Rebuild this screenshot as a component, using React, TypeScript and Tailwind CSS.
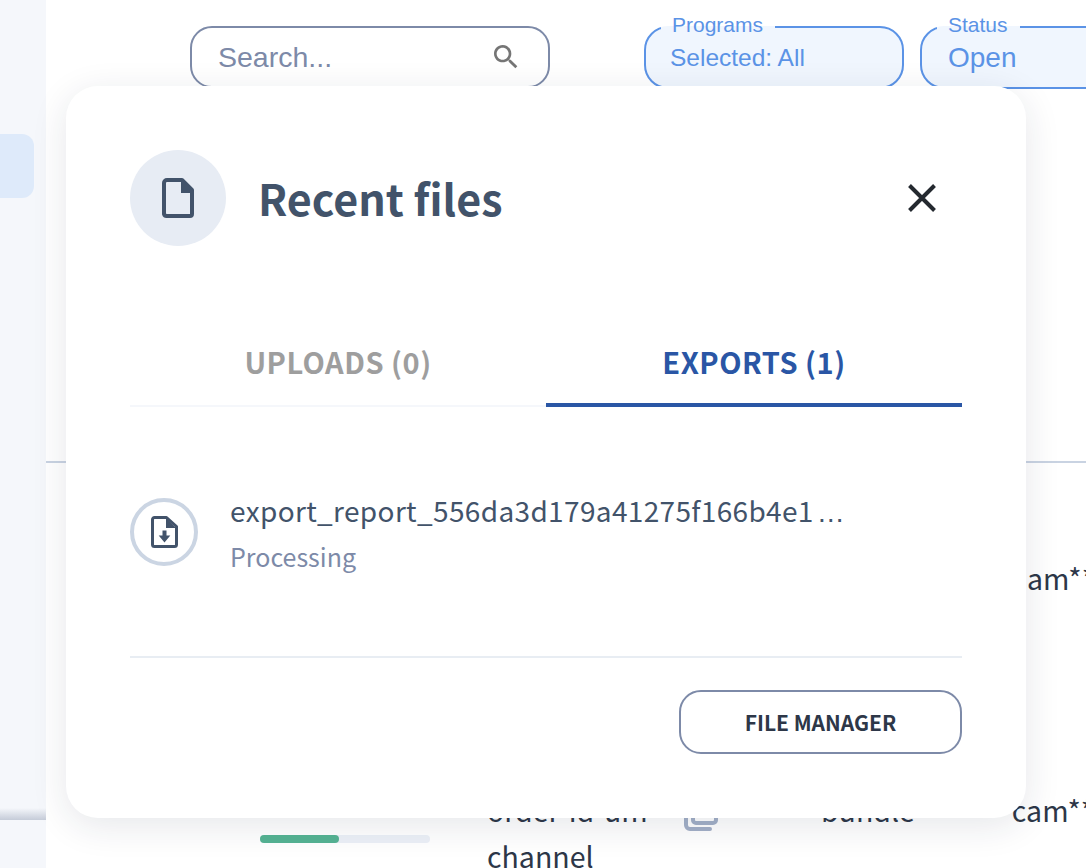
const sourceSans = '"Noto Sans CJK SC", "Noto Sans", sans-serif';

function SearchIcon() {
  return (
    <svg viewBox="0 0 24 24" className="h-8 w-8 fill-[#757575]">
      <path d="M15.5 14h-.79l-.28-.27C15.41 12.59 16 11.11 16 9.5 16 5.91 13.09 3 9.5 3S3 5.91 3 9.5 5.91 16 9.5 16c1.61 0 3.09-.59 4.23-1.57l.27.28v.79l5 4.99L20.49 19l-4.99-5zm-6 0C7.01 14 5 11.99 5 9.5S7.01 5 9.5 5 14 7.01 14 9.5 11.99 14 9.5 14z" />
    </svg>
  );
}

function FileIcon() {
  return (
    <svg viewBox="0 0 32 40" className="h-10 w-8">
      <path d="M5 2h15L30 12v24a2 2 0 0 1-2 2H5a3 3 0 0 1-3-2V5a3 3 0 0 1 3-3z" fill="none" stroke="#42536a" strokeWidth="4" strokeLinejoin="round" />
      <path d="M19 1 31 13v2H19z" fill="#42536a" />
    </svg>
  );
}

function ExportFileIcon() {
  return (
    <svg viewBox="0 0 27 32" className="h-8 w-[27px]">
      <path d="M3.500 1.500h12L25.500 10.500v18a2 2 0 0 1-2 2h-20a2 2 0 0 1-2-2v-25a2 2 0 0 1 2-2z" fill="none" stroke="#42536a" strokeWidth="3" strokeLinejoin="round" />
      <path d="M15 2 25 12H15z" fill="#42536a" />
      <path d="M11.500 14.500h4v5h3.800L13.500 26.500 7.700 19.500h3.800z" fill="#42536a" />
    </svg>
  );
}

function CopyIcon() {
  return (
    <svg viewBox="0 0 34 34" className="h-[34px] w-[34px] fill-none stroke-[#a3b0c8] stroke-[4]">
      <path d="M2 8v20a4 4 0 0 0 4 4h20" strokeLinecap="round" />
      <rect x="9" y="2" width="23" height="24" rx="3" />
    </svg>
  );
}

function Filter({ label, value, big }: { label: string; value: string; big?: boolean }) {
  return (
    <fieldset className="h-[75px] w-[260px] shrink-0 rounded-[24px] border-2 border-[#5b93e6] bg-[#f0f6fe] pl-[12px] text-[#5b93e6]">
      <legend className="ml-[3px] pb-[4px] pl-[11px] pr-[12px] text-[21px] leading-[22px]">{label}</legend>
      <div className={`leading-[36px] ${big ? 'pl-[14px] text-[28px]' : 'pl-[12px] text-[24.5px]'}`}>{value}</div>
    </fieldset>
  );
}

function RecentFiles() {
  return (
    <div
      className="absolute left-[66px] top-[86px] flex h-[732px] w-[960px] flex-col rounded-[32px] bg-white px-[64px] pt-[64px] shadow-[0_8px_36px_rgba(30,40,60,0.11)]"
      style={{ fontFamily: sourceSans }}
    >
      <div className="flex h-[96px] items-center">
        <div className="flex h-[96px] w-[96px] items-center justify-center rounded-full bg-[#e7ecf4]">
          <FileIcon />
        </div>
        <h2 className="-mt-[2px] ml-[32px] text-[43px] font-bold leading-[60px] text-[#42536a]">Recent files</h2>
        <svg viewBox="0 0 28 28" className="ml-auto mr-[26px] h-7 w-7 stroke-[#24292f] stroke-[4]">
          <path d="M1.500 1.500 26.500 26.500M26.500 1.500 1.500 26.500" />
        </svg>
      </div>

      <div className="mt-[94px] flex h-[67px] border-b-2 border-[#f5f7fb] text-[29px] font-semibold leading-[42px] tracking-[0.5px]">
        <div className="flex-1 text-center text-[#9e9e9e]">UPLOADS (0)</div>
        <div className="-mb-[2px] flex-1 border-b-4 border-[#2a56a5] text-center text-[#2a56a5]">EXPORTS (1)</div>
      </div>

      <div className="mt-[91px] flex items-start">
        <div className="flex h-[68px] w-[68px] shrink-0 items-center justify-center rounded-full border-4 border-[#cbd5e3]">
          <ExportFileIcon />
        </div>
        <div className="ml-[32px]">
          <div className="-mt-[8px] whitespace-nowrap text-[28px] leading-[40px] tracking-[0.35px] text-[#42536a]">
            export_report_556da3d179a41275f166b4e1
            <span className="ml-[3px]" style={{ fontFamily: '"Liberation Sans", sans-serif' }}>…</span>
          </div>
          <div className="mt-[3px] text-[25px] leading-[40px] text-[#7d8aa8]">Processing</div>
        </div>
      </div>

      <div className="mt-[80px] h-[2px] bg-[#e8edf3]" />
      <div className="mt-[32px] flex justify-end">
        <button className="h-[64px] w-[283px] rounded-[22px] border-2 border-[#7d8aa8] text-[21px] font-semibold leading-[32px] text-[#2d3748]">
          FILE MANAGER
        </button>
      </div>
    </div>
  );
}

export default function App() {
  return (
    <div className="relative flex h-[868px] w-[1086px] overflow-hidden bg-white" style={{ fontFamily: '"Liberation Sans", Arial, sans-serif' }}>
      <aside className="flex w-[46px] shrink-0 flex-col bg-[#f5f7fb] pt-[134px]">
        <div className="h-[64px] w-[34px] rounded-r-[12px] bg-[#deeafa]" />
        <div className="mb-[48px] mt-auto h-[12px] bg-gradient-to-b from-[#f5f7fb] to-[#c5cbd8]" />
      </aside>

      <main className="min-w-0 flex-1">
        <div className="flex h-[89px] items-start pl-[144px] pt-[14px]">
          <div className="mt-[12px] flex h-[62px] w-[360px] shrink-0 items-center justify-between rounded-[22px] border-2 border-[#7d8aa8] px-[26px]">
            <span className="text-[28.500px] text-[#7d8aa8]">Search...</span>
            <SearchIcon />
          </div>
          <div className="ml-[94px] flex gap-[16px]">
            <Filter label="Programs" value="Selected: All" />
            <Filter label="Status" value="Open" big />
          </div>
        </div>

        <div className="mt-[372px] border-t-2 border-[#c9d3e2]" />

        <div className="text-[28.500px] leading-[44px] text-[#2d3748]" style={{ fontFamily: sourceSans }}>
          <div className="mt-[93px] flex justify-end">
            <span className="w-[59px] shrink-0 whitespace-nowrap">am***</span>
          </div>
          <div className="mt-[188px] flex items-start">
            <div className="ml-[214px] w-[170px] shrink-0 pt-[47px]">
              <div className="h-2 rounded-full bg-[#ecf0f7]">
                <div className="h-2 w-[79px] rounded-full bg-[#55b393]" />
              </div>
            </div>
            <div className="-mt-[1px] ml-[57px] w-[197px] shrink-0 leading-[46px]">order-id-um channel</div>
            <div className="mt-[9px] shrink-0"><CopyIcon /></div>
            <div className="ml-[103px] shrink-0">bundle</div>
            <div className="ml-[97px] shrink-0 whitespace-nowrap">cam***</div>
          </div>
        </div>
      </main>

      <RecentFiles />
    </div>
  );
}
